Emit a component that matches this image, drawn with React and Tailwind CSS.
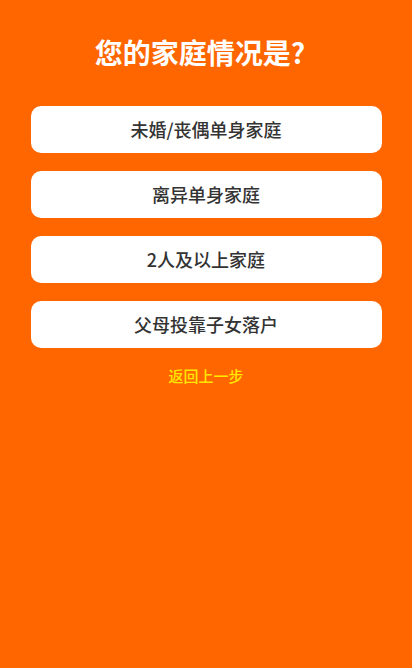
export default function App() {
  const items = ["未婚/丧偶单身家庭", "离异单身家庭", "2人及以上家庭", "父母投靠子女落户"];
  return (
    <div className="w-[412px] h-[668px] bg-[#ff6600] flex flex-col items-center" style={{ fontFamily: '"Noto Sans CJK SC", "Noto Sans", sans-serif' }}>
      <div className="mt-[34px] h-[36px] leading-[36px] text-white text-[28px] font-bold pr-[12px]">您的家庭情况是?</div>
      <div className="mt-[36px] flex flex-col gap-[18px]">
        {items.map((t) => (
          <div key={t} className="w-[351px] h-[47px] bg-white rounded-[10px] flex items-center justify-center text-[18px] font-medium text-[#333333]">
            {t}
          </div>
        ))}
      </div>
      <div className="mt-[17px] text-[15px] font-medium text-[#ffe600]">返回上一步</div>
    </div>
  );
}
